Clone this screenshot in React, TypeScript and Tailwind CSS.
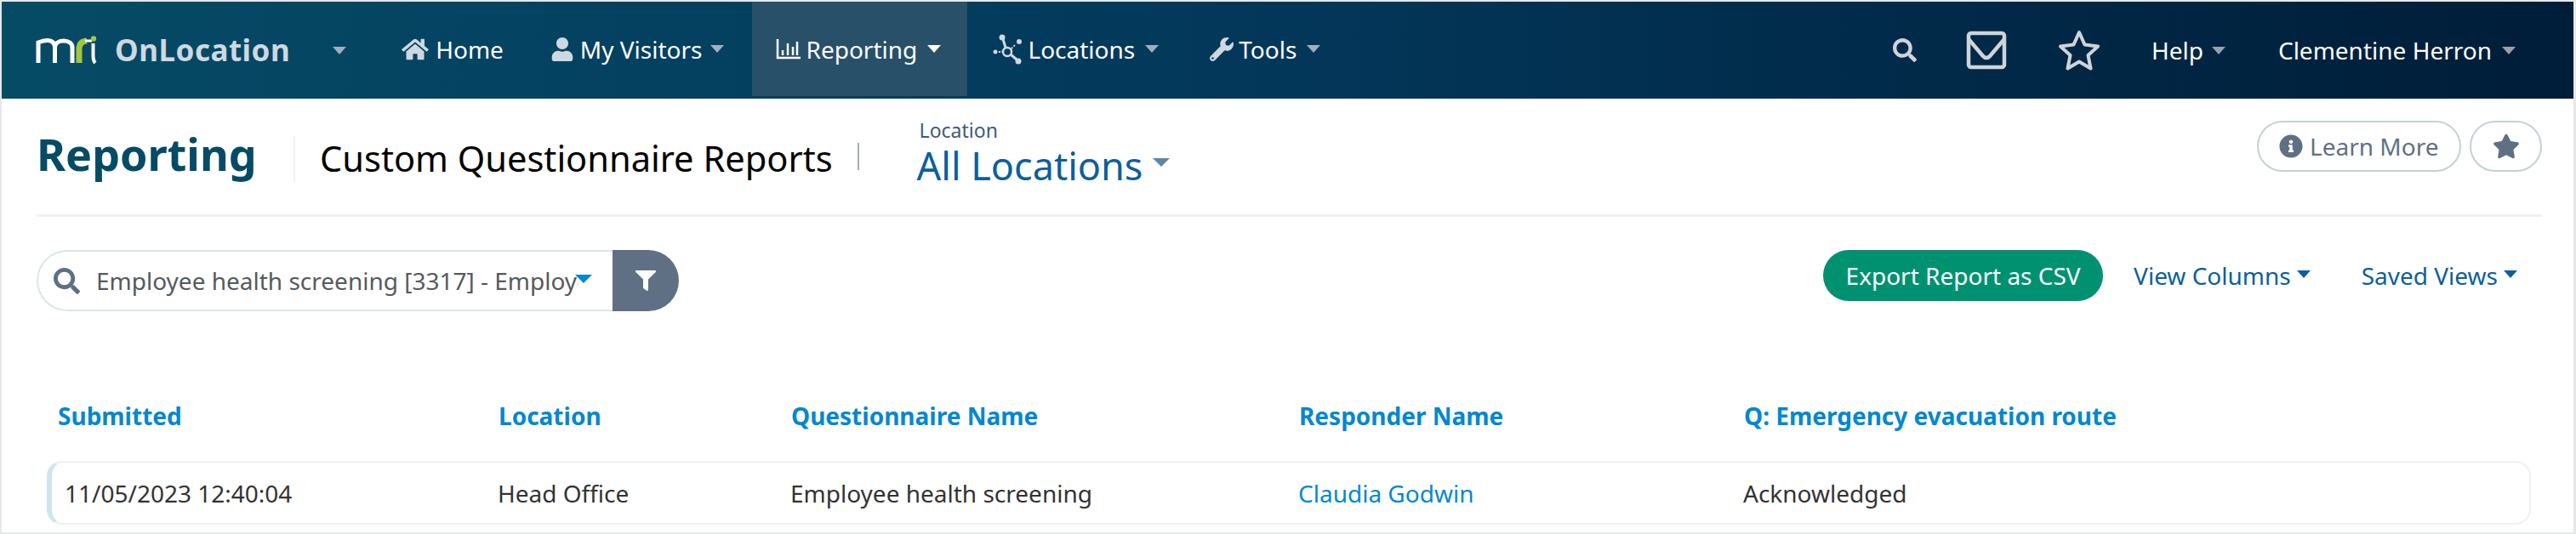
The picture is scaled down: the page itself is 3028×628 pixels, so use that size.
import React from 'react';
import { FaHome, FaUser, FaWrench, FaSearch, FaInfoCircle, FaStar, FaFilter } from 'react-icons/fa';

const Caret = ({ className = '' }: { className?: string }) => (
  <span className={`inline-block w-0 h-0 border-x-[8px] border-x-transparent border-t-[9px] ${className}`} />
);

const Logo = () => (
  <svg width="72" height="34" viewBox="0 0 72 34" fill="none" className="block">
    <path d="M3 32V8c6-2.500 11-3 14-2 3.500 1 5.500 4 5.500 8v18M22.500 14c0-5 4.500-8 10-8 6 0 10.500 3 10.500 8v18" stroke="#fff" strokeWidth="5" />
    <path d="M51 32V16c0-6 3-9.500 9-10" stroke="#a4c639" strokeWidth="7" />
    <path d="M58 6h8" stroke="#fff" strokeWidth="3" />
    <circle cx="68" cy="3.500" r="3.200" fill="#a4c639" />
    <path d="M67.500 9v15c0 4 1 6.500 2.500 8" stroke="#fff" strokeWidth="4" />
  </svg>
);

const ChartIcon = () => (
  <svg width="30" height="26" viewBox="0 0 30 26" fill="none" stroke="#fff" strokeWidth="2.500" className="block">
    <path d="M2 1v22h27" />
    <path d="M8 20v-6M14 20V6M20 20V10M25 20V4" />
  </svg>
);

const NetworkIcon = () => (
  <svg width="36" height="36" viewBox="0 0 36 36" fill="#cfd8e0" className="block">
    <circle cx="11" cy="4" r="3.500" />
    <circle cx="3" cy="21" r="2.500" />
    <circle cx="31" cy="9" r="3" />
    <circle cx="30" cy="32" r="3.500" />
    <circle cx="17" cy="21" r="5" fill="none" stroke="#cfd8e0" strokeWidth="2.500" />
    <path d="M12 6l3 10M21 24l7 6" stroke="#cfd8e0" strokeWidth="3" />
    <path d="M7 21h4M22 17l5-5" stroke="#cfd8e0" strokeWidth="2" strokeDasharray="2 1.500" />
  </svg>
);

const Envelope = () => (
  <svg width="48" height="46" viewBox="0 0 48 46" fill="none" stroke="#cfd4da" strokeWidth="4.500" className="block">
    <rect x="3" y="3" width="42" height="40" rx="3" />
    <path d="M3 10l17 20c2 2.500 6 2.500 8 0l17-20" strokeLinejoin="round" />
  </svg>
);

const StarOutline = () => (
  <svg width="50" height="48" viewBox="0 0 50 48" fill="none" stroke="#cfd4da" strokeWidth="4" strokeLinejoin="round" className="block">
    <path d="M25 3l6.500 14.500 15.500 2-11.500 10.500 3 15.500-13.500-8-13.500 8 3-15.500L3 19.500l15.500-2z" />
  </svg>
);

const navClass = 'flex items-center h-[111px] self-start text-white text-[28px]';

export default function App() {
  return (
    <div className="w-[3028px] h-[628px] bg-white border-2 border-[#e6e8e8] border-r-[3px] overflow-hidden font-['Noto_Sans',sans-serif]">
      <nav className="h-[114px] flex items-start bg-gradient-to-r from-[#064b66] via-[#03375a] to-[#001d38] text-[#cfd8e0]">
        <div className="flex items-center h-[114px] pl-[40px]">
          <Logo />
          <span className="ml-[21px] text-[35px] font-bold tracking-[0.5px] text-[#cfd8e0]">OnLocation</span>
          <Caret className="ml-[50px] border-t-[#9fb0bc]" />
        </div>
        <div className={`${navClass} ml-[64px]`}>
          <FaHome className="w-[34px] h-[28px] text-[#cfd8e0]" />
          <span className="ml-[7px]">Home</span>
        </div>
        <div className={`${navClass} ml-[56px]`}>
          <FaUser className="w-[26px] h-[28px] text-[#cfd8e0]" />
          <span className="ml-[8px]">My Visitors</span>
          <Caret className="ml-[9px] border-t-[#9fb0bc]" />
        </div>
        <div className={`${navClass} ml-[33px] w-[253px] pl-[28px] bg-[#285068]`}>
          <ChartIcon />
          <span className="ml-[6px]">Reporting</span>
          <Caret className="ml-[12px] border-t-white" />
        </div>
        <div className={`${navClass} ml-[30px]`}>
          <NetworkIcon />
          <span className="ml-[6px]">Locations</span>
          <Caret className="ml-[12px] border-t-[#9fb0bc]" />
        </div>
        <div className={`${navClass} ml-[60px]`}>
          <FaWrench className="w-[28px] h-[30px] text-[#cfd8e0]" />
          <span className="ml-[6px]">Tools</span>
          <Caret className="ml-[12px] border-t-[#9fb0bc]" />
        </div>
        <div className="ml-auto flex items-center h-[114px]">
          <FaSearch className="w-[28px] h-[28px] text-[#cfd4da]" />
          <div className="ml-[58px]"><Envelope /></div>
          <div className="ml-[60px]"><StarOutline /></div>
          <span className="ml-[60px] text-[28px] text-white">Help</span>
          <Caret className="ml-[10px] border-t-[#9a9fa8]" />
          <span className="ml-[62px] text-[28px] text-white">Clementine Herron</span>
          <Caret className="ml-[12px] mr-[68px] border-t-[#9a9fa8]" />
        </div>
      </nav>

      <div className="ml-[41px] mr-[37px]">
        <header className="relative h-[139px] flex items-start border-b-[3px] border-[#eff2f2]">
          <h1 className="mt-[30px] text-[52px] font-bold leading-[70px] text-[#064b66] w-[302px]">Reporting</h1>
          <span className="mt-[44px] h-[54px] w-[2px] bg-[#eff2f2]" />
          <span className="mt-[42px] ml-[29px] text-[41.6px] leading-[56px] text-black">Custom Questionnaire Reports</span>
          <span className="mt-[52px] ml-[29px] w-[2px] h-[32px] bg-[#a3adb5]" />
          <div className="ml-[68px] mt-[22px]">
            <div className="text-[23px] leading-[30px] text-[#3d5c78] ml-[3px]">Location</div>
            <div className="flex items-center text-[45px] leading-[54px] text-[#0b5f9e]">
              All Locations
              <Caret className="ml-[12px] mb-[8px] border-x-[10px] border-t-[10px] border-t-[#5b87ad]" />
            </div>
          </div>
          <div className="ml-auto mt-[26px] flex gap-[10px]">
            <button className="flex items-center h-[60px] w-[240px] pl-[24px] rounded-full border-2 border-[#c5d1d5] text-[#5f7085] text-[28px]">
              <FaInfoCircle className="w-[28px] h-[28px] mr-[8px]" />
              Learn More
            </button>
            <button className="flex items-center justify-center h-[60px] w-[85px] rounded-full border-2 border-[#c5d1d5] text-[#5f7085]">
              <FaStar className="w-[32px] h-[30px]" />
            </button>
          </div>
        </header>

        <div className="flex items-start mt-[39px]">
          <div className="flex h-[72px] w-[755px]">
            <div className="flex-1 flex items-center pl-[18px] rounded-l-full border-2 border-r-0 border-[#dbe5e7] bg-white">
              <FaSearch className="w-[31px] h-[31px] text-[#5f7085]" />
              <span className="ml-[19px] w-[567px] whitespace-nowrap overflow-hidden text-[28px] text-[#555a5e]">Employee health screening [3317] - Employee health screening</span>
              <Caret className="ml-[-4px] mb-[4px] border-x-[10px] border-t-[10px] border-t-[#0088d0]" />
            </div>
            <div className="w-[78px] flex items-center justify-center rounded-r-full bg-[#5f7085]">
              <FaFilter className="w-[24px] h-[24px] text-white" />
            </div>
          </div>
          <div className="ml-auto flex items-center mr-[29px]">
            <button className="h-[60px] w-[329px] rounded-full bg-[#009270] text-white text-[28px]">Export Report as CSV</button>
            <span className="ml-[36px] text-[28px] text-[#0b5f9e]">View Columns</span>
            <Caret className="ml-[7px] mb-[4px] border-t-[#0b5f9e]" />
            <span className="ml-[60px] text-[28px] text-[#0b5f9e]">Saved Views</span>
            <Caret className="ml-[7px] mb-[4px] border-t-[#0b5f9e]" />
          </div>
        </div>

        <div className="mt-[104px] pl-[25px] grid grid-cols-[518px_344px_597px_523px_1fr] text-[28px] leading-[38px] font-bold text-[#0088d0]">
          <span>Submitted</span>
          <span>Location</span>
          <span>Questionnaire Name</span>
          <span>Responder Name</span>
          <span>Q: Emergency evacuation route</span>
        </div>

        <div className="mt-[34px] ml-[12px] mr-[13px] h-[75px] grid grid-cols-[509px_344px_597px_523px_1fr] items-center pl-[15px] rounded-[18px] border-2 border-l-[6px] border-[#eef2f2] border-l-[#cde6ee] text-[28px] text-[#333]">
          <span>11/05/2023 12:40:04</span>
          <span>Head Office</span>
          <span>Employee health screening</span>
          <span className="text-[#0088d0]">Claudia Godwin</span>
          <span>Acknowledged</span>
        </div>
      </div>
    </div>
  );
}
